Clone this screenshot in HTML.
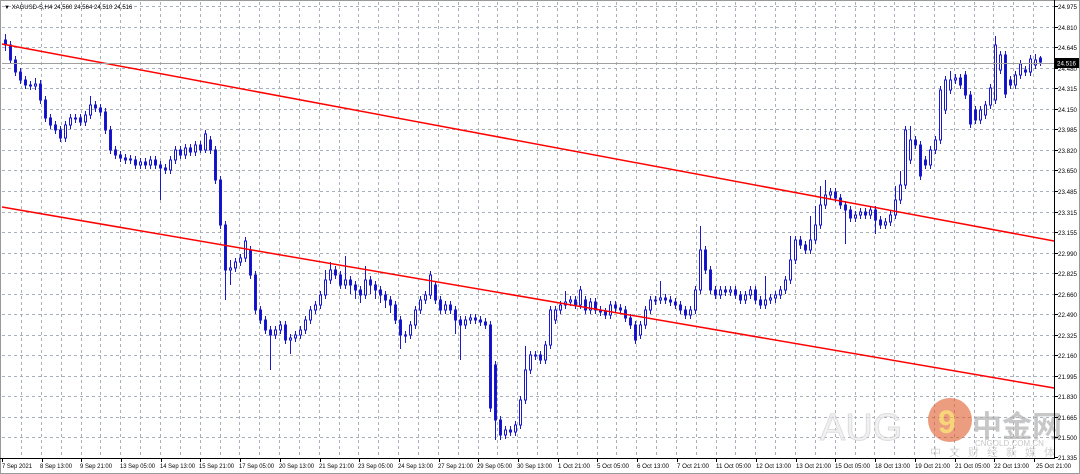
<!DOCTYPE html>
<html><head><meta charset="utf-8"><style>
html,body{margin:0;padding:0;background:#fff;width:1080px;height:474px;overflow:hidden}
svg{position:absolute;left:0;top:0}
.d{fill:#1010cc;stroke:#1a1acc;stroke-width:1}
.u{fill:#fff;stroke:#1a1acc;stroke-width:1}
.t{font-size:6.5px;fill:#000}
</style></head><body>
<svg width="1080" height="474" xmlns="http://www.w3.org/2000/svg" font-family="Liberation Sans, sans-serif">
<rect x="0" y="0" width="1080" height="474" fill="#fff"/>
<path stroke="#a8b0bc" stroke-width="1" stroke-dasharray="3,3" fill="none" d="M2 6.5H1054M2 27.5H1054M2 47.5H1054M2 68.5H1054M2 88.5H1054M2 109.5H1054M2 129.5H1054M2 150.5H1054M2 170.5H1054M2 191.5H1054M2 212.5H1054M2 232.5H1054M2 253.5H1054M2 273.5H1054M2 294.5H1054M2 314.5H1054M2 335.5H1054M2 355.5H1054M2 376.5H1054M2 396.5H1054M2 417.5H1054M2 437.5H1054
M21.5 2V458M41.5 2V458M61.5 2V458M81.5 2V458M100.5 2V458M120.5 2V458M140.5 2V458M160.5 2V458M180.5 2V458M200.5 2V458M220.5 2V458M239.5 2V458M259.5 2V458M279.5 2V458M299.5 2V458M319.5 2V458M339.5 2V458M358.5 2V458M378.5 2V458M398.5 2V458M418.5 2V458M438.5 2V458M458.5 2V458M478.5 2V458M497.5 2V458M517.5 2V458M537.5 2V458M557.5 2V458M577.5 2V458M597.5 2V458M616.5 2V458M636.5 2V458M656.5 2V458M676.5 2V458M696.5 2V458M716.5 2V458M735.5 2V458M755.5 2V458M775.5 2V458M795.5 2V458M815.5 2V458M835.5 2V458M855.5 2V458M874.5 2V458M894.5 2V458M914.5 2V458M934.5 2V458M954.5 2V458M974.5 2V458M993.5 2V458M1013.5 2V458M1033.5 2V458"/>
<path stroke="#1a1acc" stroke-width="1" fill="none" d="M5.5 34V51M10.5 41V64M15.5 56V76M20.5 68V84M25.5 76V89M30.5 81V90M35.5 78V90M40.5 80V104M45.5 96V122M50.5 114V129M55.5 121V134M60.5 126V142M65.5 121V142M70.5 114V129M75.5 114V123M80.5 114V126M85.5 111V126M90.5 96V119M95.5 101V112M100.5 104V116M105.5 108V134M110.5 126V154M115.5 146V159M120.5 151V162M125.5 154V164M130.5 155V164M135.5 156V169M140.5 158V169M145.5 158V169M150.5 156V169M155.5 156V169M160.5 161V200M165.5 164V174M170.5 156V174M175.5 146V164M180.5 146V159M185.5 144V159M190.5 144V156M195.5 141V156M200.5 141V153M205.5 130V153M210.5 136V154M215.5 146V184M220.5 176V229M225.5 221V300M230.5 260V285M235.5 258V272M240.5 254V266M245.5 237V262M250.5 246V279M255.5 271V314M260.5 306V324M265.5 316V334M270.5 326V370M275.5 326V339M280.5 321V334M285.5 321V344M290.5 334V354M295.5 331V342M300.5 326V339M305.5 316V334M310.5 306V324M315.5 301V314M320.5 291V309M325.5 270V299M330.5 262V284M335.5 266V279M340.5 271V289M345.5 256V289M350.5 276V294M355.5 281V299M360.5 286V303M365.5 266V299M370.5 276V294M375.5 281V299M380.5 286V303M385.5 291V308M390.5 296V313M395.5 301V324M400.5 316V349M405.5 331V343M410.5 321V339M415.5 306V329M420.5 296V314M425.5 291V304M430.5 271V299M435.5 281V304M440.5 296V314M445.5 301V314M450.5 301V314M455.5 306V334M460.5 316V360M465.5 316V329M470.5 314V324M475.5 314V324M480.5 316V326M485.5 318V329M490.5 321V412M495.5 361V440M500.5 416V440M505.5 426V439M510.5 426V436M515.5 421V436M520.5 396V429M525.5 346V404M530.5 351V374M535.5 351V360M540.5 351V364M545.5 341V364M550.5 306V349M555.5 306V324M560.5 301V314M565.5 291V309M570.5 296V306M575.5 296V309M580.5 286V309M585.5 296V314M590.5 298V314M595.5 298V314M600.5 306V316M605.5 308V319M610.5 301V319M615.5 301V312M620.5 304V314M625.5 306V322M630.5 314V329M635.5 321V344M640.5 321V339M645.5 306V329M650.5 296V314M655.5 296V305M660.5 281V304M665.5 294V304M670.5 296V306M675.5 298V309M680.5 301V314M685.5 306V319M690.5 306V319M695.5 286V314M700.5 226V294M705.5 246V274M710.5 266V294M715.5 286V299M720.5 286V299M725.5 286V296M730.5 286V296M735.5 286V299M740.5 291V304M745.5 291V304M750.5 286V299M755.5 286V304M760.5 296V309M765.5 276V309M770.5 294V304M775.5 291V303M780.5 286V299M785.5 276V294M790.5 236V284M795.5 236V264M800.5 236V249M805.5 241V254M810.5 216V254M815.5 206V244M820.5 186V229M825.5 180V209M830.5 188V199M835.5 188V202M840.5 194V209M845.5 201V244M850.5 206V222M855.5 211V222M860.5 208V219M865.5 208V219M870.5 206V219M875.5 206V234M880.5 216V229M885.5 218V229M890.5 211V226M895.5 186V219M900.5 171V204M905.5 126V189M910.5 126V164M915.5 136V149M920.5 141V180M925.5 156V169M930.5 146V169M935.5 136V154M940.5 86V144M945.5 76V114M950.5 71V94M955.5 74V84M960.5 74V89M965.5 71V99M970.5 91V128M975.5 106V124M980.5 106V124M985.5 101V119M990.5 84V109M995.5 36V104M1000.5 51V74M1005.5 51V98M1010.5 76V89M1015.5 71V89M1020.5 60V79M1025.5 66V76M1030.5 55V76M1035.5 54V69M1040.5 56V66"/>
<g>
<rect class="d" x="4.5" y="40" width="2" height="5"/><rect class="d" x="9.5" y="45" width="2" height="15"/><rect class="d" x="14.5" y="60" width="2" height="12"/><rect class="d" x="19.5" y="72" width="2" height="8"/><rect class="d" x="24.5" y="80" width="2" height="5"/><rect class="d" x="29.5" y="85" width="2" height="1"/><rect class="u" x="34.5" y="84" width="2" height="2"/><rect class="d" x="39.5" y="84" width="2" height="16"/><rect class="d" x="44.5" y="100" width="2" height="18"/><rect class="d" x="49.5" y="118" width="2" height="7"/><rect class="d" x="54.5" y="125" width="2" height="5"/><rect class="d" x="59.5" y="130" width="2" height="8"/><rect class="u" x="64.5" y="125" width="2" height="13"/><rect class="u" x="69.5" y="118" width="2" height="7"/><rect class="d" x="74.5" y="118" width="2" height="1"/><rect class="d" x="79.5" y="118" width="2" height="4"/><rect class="u" x="84.5" y="115" width="2" height="7"/><rect class="u" x="89.5" y="105" width="2" height="10"/><rect class="d" x="94.5" y="105" width="2" height="3"/><rect class="d" x="99.5" y="108" width="2" height="4"/><rect class="d" x="104.5" y="112" width="2" height="18"/><rect class="d" x="109.5" y="130" width="2" height="20"/><rect class="d" x="114.5" y="150" width="2" height="5"/><rect class="d" x="119.5" y="155" width="2" height="3"/><rect class="d" x="124.5" y="158" width="2" height="2"/><rect class="u" x="129.5" y="159" width="2" height="1"/><rect class="d" x="134.5" y="160" width="2" height="5"/><rect class="u" x="139.5" y="162" width="2" height="3"/><rect class="d" x="144.5" y="162" width="2" height="3"/><rect class="u" x="149.5" y="160" width="2" height="5"/><rect class="d" x="154.5" y="160" width="2" height="5"/><rect class="d" x="159.5" y="165" width="2" height="3"/><rect class="d" x="164.5" y="168" width="2" height="2"/><rect class="u" x="169.5" y="160" width="2" height="10"/><rect class="u" x="174.5" y="150" width="2" height="10"/><rect class="d" x="179.5" y="150" width="2" height="5"/><rect class="u" x="184.5" y="148" width="2" height="7"/><rect class="d" x="189.5" y="148" width="2" height="4"/><rect class="u" x="194.5" y="145" width="2" height="7"/><rect class="d" x="199.5" y="145" width="2" height="5"/><rect class="u" x="204.5" y="134" width="2" height="16"/><rect class="d" x="209.5" y="140" width="2" height="10"/><rect class="d" x="214.5" y="150" width="2" height="30"/><rect class="d" x="219.5" y="180" width="2" height="45"/><rect class="d" x="224.5" y="225" width="2" height="45"/><rect class="u" x="229.5" y="268" width="2" height="2"/><rect class="u" x="234.5" y="262" width="2" height="6"/><rect class="u" x="239.5" y="258" width="2" height="4"/><rect class="u" x="244.5" y="241" width="2" height="17"/><rect class="d" x="249.5" y="250" width="2" height="25"/><rect class="d" x="254.5" y="275" width="2" height="35"/><rect class="d" x="259.5" y="310" width="2" height="10"/><rect class="d" x="264.5" y="320" width="2" height="10"/><rect class="d" x="269.5" y="330" width="2" height="5"/><rect class="u" x="274.5" y="330" width="2" height="5"/><rect class="u" x="279.5" y="325" width="2" height="5"/><rect class="d" x="284.5" y="325" width="2" height="15"/><rect class="u" x="289.5" y="338" width="2" height="2"/><rect class="u" x="294.5" y="335" width="2" height="3"/><rect class="u" x="299.5" y="330" width="2" height="5"/><rect class="u" x="304.5" y="320" width="2" height="10"/><rect class="u" x="309.5" y="310" width="2" height="10"/><rect class="u" x="314.5" y="305" width="2" height="5"/><rect class="u" x="319.5" y="295" width="2" height="10"/><rect class="u" x="324.5" y="280" width="2" height="15"/><rect class="u" x="329.5" y="270" width="2" height="10"/><rect class="d" x="334.5" y="270" width="2" height="5"/><rect class="d" x="339.5" y="275" width="2" height="10"/><rect class="u" x="344.5" y="280" width="2" height="5"/><rect class="d" x="349.5" y="280" width="2" height="5"/><rect class="d" x="354.5" y="285" width="2" height="5"/><rect class="d" x="359.5" y="290" width="2" height="5"/><rect class="u" x="364.5" y="280" width="2" height="15"/><rect class="d" x="369.5" y="280" width="2" height="5"/><rect class="d" x="374.5" y="285" width="2" height="5"/><rect class="d" x="379.5" y="290" width="2" height="5"/><rect class="d" x="384.5" y="295" width="2" height="5"/><rect class="d" x="389.5" y="300" width="2" height="5"/><rect class="d" x="394.5" y="305" width="2" height="15"/><rect class="d" x="399.5" y="320" width="2" height="15"/><rect class="d" x="404.5" y="335" width="2" height="1"/><rect class="u" x="409.5" y="325" width="2" height="10"/><rect class="u" x="414.5" y="310" width="2" height="15"/><rect class="u" x="419.5" y="300" width="2" height="10"/><rect class="u" x="424.5" y="295" width="2" height="5"/><rect class="u" x="429.5" y="275" width="2" height="20"/><rect class="d" x="434.5" y="285" width="2" height="15"/><rect class="d" x="439.5" y="300" width="2" height="10"/><rect class="u" x="444.5" y="305" width="2" height="5"/><rect class="d" x="449.5" y="305" width="2" height="5"/><rect class="d" x="454.5" y="310" width="2" height="10"/><rect class="d" x="459.5" y="320" width="2" height="5"/><rect class="u" x="464.5" y="320" width="2" height="5"/><rect class="u" x="469.5" y="318" width="2" height="2"/><rect class="d" x="474.5" y="318" width="2" height="2"/><rect class="d" x="479.5" y="320" width="2" height="2"/><rect class="d" x="484.5" y="322" width="2" height="3"/><rect class="d" x="489.5" y="325" width="2" height="83"/><rect class="d" x="494.5" y="365" width="2" height="55"/><rect class="d" x="499.5" y="420" width="2" height="15"/><rect class="u" x="504.5" y="430" width="2" height="5"/><rect class="d" x="509.5" y="430" width="2" height="2"/><rect class="u" x="514.5" y="425" width="2" height="7"/><rect class="u" x="519.5" y="400" width="2" height="25"/><rect class="u" x="524.5" y="370" width="2" height="30"/><rect class="u" x="529.5" y="355" width="2" height="15"/><rect class="d" x="534.5" y="355" width="2" height="1"/><rect class="d" x="539.5" y="355" width="2" height="5"/><rect class="u" x="544.5" y="345" width="2" height="15"/><rect class="u" x="549.5" y="310" width="2" height="35"/><rect class="u" x="554.5" y="310" width="2" height="10"/><rect class="u" x="559.5" y="305" width="2" height="5"/><rect class="u" x="564.5" y="302" width="2" height="3"/><rect class="u" x="569.5" y="300" width="2" height="2"/><rect class="d" x="574.5" y="300" width="2" height="5"/><rect class="u" x="579.5" y="290" width="2" height="15"/><rect class="d" x="584.5" y="300" width="2" height="10"/><rect class="u" x="589.5" y="302" width="2" height="8"/><rect class="d" x="594.5" y="302" width="2" height="8"/><rect class="d" x="599.5" y="310" width="2" height="2"/><rect class="d" x="604.5" y="312" width="2" height="3"/><rect class="u" x="609.5" y="305" width="2" height="10"/><rect class="d" x="614.5" y="305" width="2" height="3"/><rect class="d" x="619.5" y="308" width="2" height="2"/><rect class="d" x="624.5" y="310" width="2" height="8"/><rect class="d" x="629.5" y="318" width="2" height="7"/><rect class="d" x="634.5" y="325" width="2" height="15"/><rect class="u" x="639.5" y="325" width="2" height="10"/><rect class="u" x="644.5" y="310" width="2" height="15"/><rect class="u" x="649.5" y="300" width="2" height="10"/><rect class="d" x="654.5" y="300" width="2" height="1"/><rect class="u" x="659.5" y="298" width="2" height="2"/><rect class="d" x="664.5" y="298" width="2" height="2"/><rect class="d" x="669.5" y="300" width="2" height="2"/><rect class="d" x="674.5" y="302" width="2" height="3"/><rect class="d" x="679.5" y="305" width="2" height="5"/><rect class="d" x="684.5" y="310" width="2" height="5"/><rect class="u" x="689.5" y="310" width="2" height="5"/><rect class="u" x="694.5" y="290" width="2" height="20"/><rect class="u" x="699.5" y="250" width="2" height="40"/><rect class="d" x="704.5" y="250" width="2" height="20"/><rect class="d" x="709.5" y="270" width="2" height="20"/><rect class="d" x="714.5" y="290" width="2" height="5"/><rect class="u" x="719.5" y="290" width="2" height="5"/><rect class="d" x="724.5" y="290" width="2" height="2"/><rect class="u" x="729.5" y="290" width="2" height="2"/><rect class="d" x="734.5" y="290" width="2" height="5"/><rect class="d" x="739.5" y="295" width="2" height="5"/><rect class="u" x="744.5" y="295" width="2" height="5"/><rect class="u" x="749.5" y="290" width="2" height="5"/><rect class="d" x="754.5" y="290" width="2" height="10"/><rect class="d" x="759.5" y="300" width="2" height="5"/><rect class="u" x="764.5" y="300" width="2" height="5"/><rect class="u" x="769.5" y="298" width="2" height="2"/><rect class="u" x="774.5" y="295" width="2" height="3"/><rect class="u" x="779.5" y="290" width="2" height="5"/><rect class="u" x="784.5" y="280" width="2" height="10"/><rect class="u" x="789.5" y="260" width="2" height="20"/><rect class="u" x="794.5" y="240" width="2" height="20"/><rect class="d" x="799.5" y="240" width="2" height="5"/><rect class="d" x="804.5" y="245" width="2" height="5"/><rect class="u" x="809.5" y="240" width="2" height="10"/><rect class="u" x="814.5" y="225" width="2" height="15"/><rect class="u" x="819.5" y="205" width="2" height="20"/><rect class="u" x="824.5" y="195" width="2" height="10"/><rect class="u" x="829.5" y="192" width="2" height="3"/><rect class="d" x="834.5" y="192" width="2" height="6"/><rect class="d" x="839.5" y="198" width="2" height="7"/><rect class="d" x="844.5" y="205" width="2" height="5"/><rect class="d" x="849.5" y="210" width="2" height="8"/><rect class="u" x="854.5" y="215" width="2" height="3"/><rect class="u" x="859.5" y="212" width="2" height="3"/><rect class="d" x="864.5" y="212" width="2" height="3"/><rect class="u" x="869.5" y="210" width="2" height="5"/><rect class="d" x="874.5" y="210" width="2" height="10"/><rect class="d" x="879.5" y="220" width="2" height="5"/><rect class="u" x="884.5" y="222" width="2" height="3"/><rect class="u" x="889.5" y="215" width="2" height="7"/><rect class="u" x="894.5" y="200" width="2" height="15"/><rect class="u" x="899.5" y="185" width="2" height="15"/><rect class="u" x="904.5" y="130" width="2" height="55"/><rect class="u" x="909.5" y="140" width="2" height="20"/><rect class="d" x="914.5" y="140" width="2" height="5"/><rect class="d" x="919.5" y="145" width="2" height="31"/><rect class="d" x="924.5" y="160" width="2" height="5"/><rect class="u" x="929.5" y="150" width="2" height="15"/><rect class="u" x="934.5" y="140" width="2" height="10"/><rect class="u" x="939.5" y="90" width="2" height="50"/><rect class="u" x="944.5" y="80" width="2" height="30"/><rect class="u" x="949.5" y="80" width="2" height="10"/><rect class="u" x="954.5" y="78" width="2" height="2"/><rect class="d" x="959.5" y="78" width="2" height="7"/><rect class="d" x="964.5" y="75" width="2" height="20"/><rect class="d" x="969.5" y="95" width="2" height="29"/><rect class="d" x="974.5" y="110" width="2" height="10"/><rect class="u" x="979.5" y="110" width="2" height="10"/><rect class="u" x="984.5" y="105" width="2" height="10"/><rect class="u" x="989.5" y="88" width="2" height="17"/><rect class="u" x="994.5" y="45" width="2" height="55"/><rect class="u" x="999.5" y="55" width="2" height="15"/><rect class="d" x="1004.5" y="55" width="2" height="39"/><rect class="d" x="1009.5" y="80" width="2" height="5"/><rect class="u" x="1014.5" y="75" width="2" height="10"/><rect class="u" x="1019.5" y="64" width="2" height="11"/><rect class="d" x="1024.5" y="70" width="2" height="2"/><rect class="u" x="1029.5" y="59" width="2" height="13"/><rect class="u" x="1034.5" y="60" width="2" height="5"/><rect class="d" x="1039.5" y="58" width="2" height="4"/>
</g>
<line x1="2" y1="44" x2="1054" y2="241" stroke="#ff0000" stroke-width="1.5"/>
<line x1="2" y1="207" x2="1054" y2="388" stroke="#ff0000" stroke-width="1.5"/>
<line x1="2" y1="63.5" x2="1054" y2="63.5" stroke="#a0a0a0"/>
<g opacity="0.7">
<text x="820" y="440" font-size="38" fill="#ececec" stroke="#d0d0d0" stroke-width="1">AUG</text>
<circle cx="950" cy="420" r="22" fill="#e05a2a" opacity="0.85"/>
<text x="938" y="433" font-size="32" font-weight="bold" fill="#f5c542">9</text>
<text x="972" y="437" font-size="30" font-weight="bold" fill="#b0b0b0" font-family="Liberation Sans, Noto Sans CJK SC, sans-serif">中金网</text>
<text x="975" y="446" font-size="8" fill="#b0b0b0">CNGOLD.COM.CN</text>
<text x="930" y="456" font-size="11" fill="#c0c0c0" letter-spacing="8" font-family="Liberation Sans, Noto Sans CJK SC, sans-serif">中文财经新媒体</text>
</g>
<text x="4" y="9" font-size="6" fill="#000">▼ XAGUSD-S,H4  24.560 24.564 24.510 24.516</text>
<rect x="0.5" y="0.5" width="1079" height="473" fill="none" stroke="#999"/>
<line x1="1054.5" y1="0" x2="1054.5" y2="459" stroke="#000"/>
<line x1="0" y1="458.5" x2="1055" y2="458.5" stroke="#000"/>
<path stroke="#000" d="M1054 6.5h4M1054 27.5h4M1054 47.5h4M1054 68.5h4M1054 88.5h4M1054 109.5h4M1054 129.5h4M1054 150.5h4M1054 170.5h4M1054 191.5h4M1054 212.5h4M1054 232.5h4M1054 253.5h4M1054 273.5h4M1054 294.5h4M1054 314.5h4M1054 335.5h4M1054 355.5h4M1054 376.5h4M1054 396.5h4M1054 417.5h4M1054 437.5h4M1054 457.5h4"/>
<g class="t">
<text x="1058" y="9" textLength="19" lengthAdjust="spacingAndGlyphs">24.975</text>
<text x="1058" y="30" textLength="19" lengthAdjust="spacingAndGlyphs">24.810</text>
<text x="1058" y="50" textLength="19" lengthAdjust="spacingAndGlyphs">24.645</text>
<text x="1058" y="71" textLength="19" lengthAdjust="spacingAndGlyphs">24.480</text>
<text x="1058" y="91" textLength="19" lengthAdjust="spacingAndGlyphs">24.315</text>
<text x="1058" y="112" textLength="19" lengthAdjust="spacingAndGlyphs">24.150</text>
<text x="1058" y="132" textLength="19" lengthAdjust="spacingAndGlyphs">23.985</text>
<text x="1058" y="153" textLength="19" lengthAdjust="spacingAndGlyphs">23.820</text>
<text x="1058" y="173" textLength="19" lengthAdjust="spacingAndGlyphs">23.650</text>
<text x="1058" y="194" textLength="19" lengthAdjust="spacingAndGlyphs">23.485</text>
<text x="1058" y="215" textLength="19" lengthAdjust="spacingAndGlyphs">23.315</text>
<text x="1058" y="235" textLength="19" lengthAdjust="spacingAndGlyphs">23.155</text>
<text x="1058" y="256" textLength="19" lengthAdjust="spacingAndGlyphs">22.990</text>
<text x="1058" y="276" textLength="19" lengthAdjust="spacingAndGlyphs">22.825</text>
<text x="1058" y="297" textLength="19" lengthAdjust="spacingAndGlyphs">22.660</text>
<text x="1058" y="317" textLength="19" lengthAdjust="spacingAndGlyphs">22.490</text>
<text x="1058" y="338" textLength="19" lengthAdjust="spacingAndGlyphs">22.325</text>
<text x="1058" y="358" textLength="19" lengthAdjust="spacingAndGlyphs">22.160</text>
<text x="1058" y="379" textLength="19" lengthAdjust="spacingAndGlyphs">21.995</text>
<text x="1058" y="399" textLength="19" lengthAdjust="spacingAndGlyphs">21.830</text>
<text x="1058" y="420" textLength="19" lengthAdjust="spacingAndGlyphs">21.665</text>
<text x="1058" y="440" textLength="19" lengthAdjust="spacingAndGlyphs">21.500</text>
<text x="1058" y="460" textLength="19" lengthAdjust="spacingAndGlyphs">21.335</text>
</g>
<path stroke="#000" d="M2.5 458v4M42.5 458v4M81.5 458v4M121.5 458v4M161.5 458v4M200.5 458v4M240.5 458v4M280.5 458v4M320.5 458v4M359.5 458v4M399.5 458v4M439.5 458v4M478.5 458v4M518.5 458v4M558.5 458v4M597.5 458v4M637.5 458v4M677.5 458v4M716.5 458v4M756.5 458v4M796.5 458v4M835.5 458v4M875.5 458v4M915.5 458v4M955.5 458v4M994.5 458v4M1034.5 458v4"/>
<g class="t">
<text x="2" y="468" textLength="30" lengthAdjust="spacingAndGlyphs">7 Sep 2021</text>
<text x="40" y="468" textLength="32" lengthAdjust="spacingAndGlyphs">8 Sep 13:00</text>
<text x="80" y="468" textLength="32" lengthAdjust="spacingAndGlyphs">9 Sep 21:00</text>
<text x="120" y="468" textLength="35" lengthAdjust="spacingAndGlyphs">13 Sep 05:00</text>
<text x="160" y="468" textLength="35" lengthAdjust="spacingAndGlyphs">14 Sep 13:00</text>
<text x="199" y="468" textLength="35" lengthAdjust="spacingAndGlyphs">15 Sep 21:00</text>
<text x="239" y="468" textLength="35" lengthAdjust="spacingAndGlyphs">17 Sep 05:00</text>
<text x="279" y="468" textLength="35" lengthAdjust="spacingAndGlyphs">20 Sep 13:00</text>
<text x="319" y="468" textLength="35" lengthAdjust="spacingAndGlyphs">21 Sep 21:00</text>
<text x="358" y="468" textLength="35" lengthAdjust="spacingAndGlyphs">23 Sep 05:00</text>
<text x="398" y="468" textLength="35" lengthAdjust="spacingAndGlyphs">24 Sep 13:00</text>
<text x="438" y="468" textLength="35" lengthAdjust="spacingAndGlyphs">27 Sep 21:00</text>
<text x="477" y="468" textLength="35" lengthAdjust="spacingAndGlyphs">29 Sep 05:00</text>
<text x="517" y="468" textLength="35" lengthAdjust="spacingAndGlyphs">30 Sep 13:00</text>
<text x="558" y="468" textLength="32" lengthAdjust="spacingAndGlyphs">1 Oct 21:00</text>
<text x="597" y="468" textLength="32" lengthAdjust="spacingAndGlyphs">5 Oct 05:00</text>
<text x="637" y="468" textLength="32" lengthAdjust="spacingAndGlyphs">6 Oct 13:00</text>
<text x="677" y="468" textLength="32" lengthAdjust="spacingAndGlyphs">7 Oct 21:00</text>
<text x="716" y="468" textLength="35" lengthAdjust="spacingAndGlyphs">11 Oct 05:00</text>
<text x="756" y="468" textLength="35" lengthAdjust="spacingAndGlyphs">12 Oct 13:00</text>
<text x="796" y="468" textLength="35" lengthAdjust="spacingAndGlyphs">13 Oct 21:00</text>
<text x="835" y="468" textLength="35" lengthAdjust="spacingAndGlyphs">15 Oct 05:00</text>
<text x="875" y="468" textLength="35" lengthAdjust="spacingAndGlyphs">18 Oct 13:00</text>
<text x="915" y="468" textLength="35" lengthAdjust="spacingAndGlyphs">19 Oct 21:00</text>
<text x="955" y="468" textLength="35" lengthAdjust="spacingAndGlyphs">21 Oct 05:00</text>
<text x="994" y="468" textLength="35" lengthAdjust="spacingAndGlyphs">22 Oct 13:00</text>
<text x="1036" y="468" textLength="35" lengthAdjust="spacingAndGlyphs">25 Oct 21:00</text>
</g>
<rect x="1055" y="58" width="24" height="10" fill="#000"/>
<text x="1057" y="65.5" font-size="6.5" fill="#fff" textLength="19" lengthAdjust="spacingAndGlyphs">24.516</text>
</svg>
</body></html>
